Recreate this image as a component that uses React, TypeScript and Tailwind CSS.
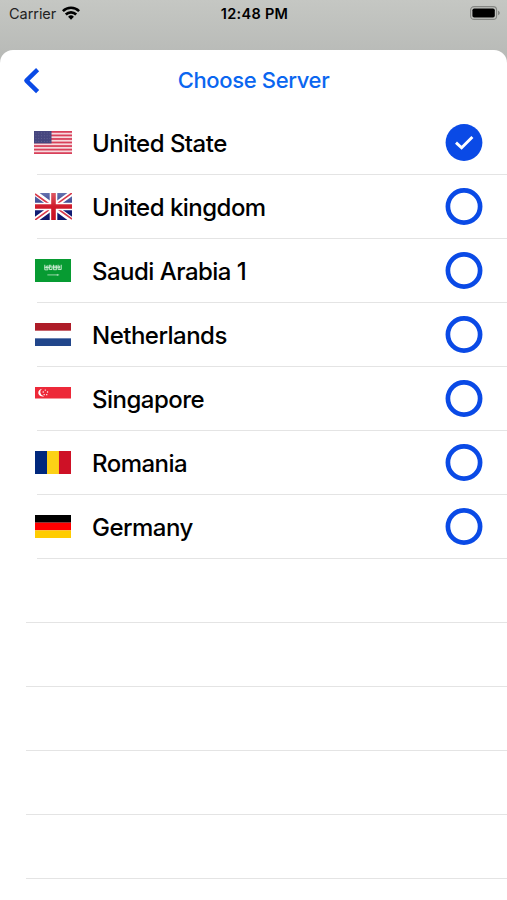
import React, { useState } from 'react';

// Flags
const UnitedStatesFlag = () => (
  <svg className="w-[38px] h-[23px]" viewBox="0 0 38 23" preserveAspectRatio="none">
    <rect width="38" height="23" fill="#f6d9de" />
    {[0, 1, 2, 3, 4, 5, 6].map((i) => (
      <rect key={i} y={i * 3.54} width="38" height="1.77" fill="#d8405a" />
    ))}
    <rect width="17.5" height="12.4" fill="#46467f" />
    {[2, 4.8, 7.6, 10.4].map((y) => (
      <path key={y} d={`M1.5 ${y}h15`} stroke="#74749f" strokeWidth="0.7" strokeDasharray="0.9 1.9" />
    ))}
  </svg>
);

const UnitedKingdomFlag = () => (
  <svg className="w-[37px] h-[27px]" viewBox="0 0 37 27">
    <defs>
      <linearGradient id="uk-blue" x1="0" y1="0" x2="0" y2="1">
        <stop offset="0" stopColor="#6672ae" />
        <stop offset="0.45" stopColor="#35428f" />
        <stop offset="0.55" stopColor="#15207c" />
        <stop offset="1" stopColor="#0d1668" />
      </linearGradient>
      <linearGradient id="uk-red" x1="0" y1="0" x2="0" y2="1">
        <stop offset="0" stopColor="#dc5964" />
        <stop offset="0.5" stopColor="#d01c2c" />
        <stop offset="1" stopColor="#c90f20" />
      </linearGradient>
    </defs>
    <rect width="37" height="27" fill="url(#uk-blue)" />
    <path d="M0 0L37 27M37 0L0 27" stroke="#fff" strokeWidth="5.4" />
    <path d="M0 0.9L14 11M37 26L23 16M37 0L23 10.2M0 27L14 16.8" stroke="#d8394a" strokeWidth="1.6" />
    <path d="M18.5 0V27M0 13.5H37" stroke="#fff" strokeWidth="7.6" />
    <path d="M16.2 0h4.6v11.2H37v4.6H20.8V27h-4.6V15.8H0v-4.6h16.2z" fill="url(#uk-red)" />
  </svg>
);

const SaudiArabiaFlag = () => (
  <svg className="w-9 h-[23px]" viewBox="0 0 35 24" preserveAspectRatio="none">
    <rect width="35" height="24" fill="#079b32" />
    <g fill="none" stroke="#d5f0dc" strokeWidth="0.9">
      <path d="M9.5 6v5.3h3V6.5M11 7v3M14 6v5h2.5V7M15.3 6v3M18 6v5.2h3V6.5M19.5 6.5v3.5M22.5 6v5h3V6M24 7v3M9.3 8.7h5M17 8.5h7" />
      <path d="M12 16.6h11.5M21.7 15.6v2" stroke="#a8dcb5" />
    </g>
  </svg>
);

const NetherlandsFlag = () => (
  <svg className="w-9 h-[23px]" viewBox="0 0 35 24" preserveAspectRatio="none">
    <rect width="35" height="24" fill="#fff" />
    <rect width="35" height="8" fill="#ae1c28" />
    <rect y="16" width="35" height="8" fill="#21468b" />
  </svg>
);

const SingaporeFlag = () => (
  <svg className="w-9 h-[23px]" viewBox="0 0 35 24" preserveAspectRatio="none">
    <rect width="35" height="24" fill="#fff" />
    <rect width="35" height="12" fill="#ed2939" />
    <path d="M7.2 1.8a4.1 4.1 0 1 0 1.6 7.9a4.3 4.3 0 0 1-1.6-7.9z" fill="#fff" />
    <g fill="#fff">
      <circle cx="10" cy="3.2" r="0.7" />
      <circle cx="8" cy="5.2" r="0.7" />
      <circle cx="12.2" cy="5.2" r="0.7" />
      <circle cx="8.9" cy="8" r="0.7" />
      <circle cx="11.4" cy="8" r="0.7" />
    </g>
  </svg>
);

const RomaniaFlag = () => (
  <svg className="w-9 h-[23px]" viewBox="0 0 35 24" preserveAspectRatio="none">
    <rect width="12" height="24" fill="#00287d" />
    <rect x="11.7" width="11.8" height="24" fill="#fcd116" />
    <rect x="23.3" width="11.7" height="24" fill="#ce1126" />
  </svg>
);

const GermanyFlag = () => (
  <svg className="w-9 h-[23px]" viewBox="0 0 35 24" preserveAspectRatio="none">
    <rect width="35" height="8" fill="#000" />
    <rect y="8" width="35" height="8" fill="#f00" />
    <rect y="16" width="35" height="8" fill="#fc0" />
  </svg>
);

// Radio style indicator on the right of a row
const Indicator = ({ checked }: { checked: boolean }) => (
  <svg className="w-[38px] h-[37px]" viewBox="0 0 38 37" fill="none">
    {checked ? (
      <>
        <circle cx="19" cy="18.5" r="18.4" fill="#0a4ae6" />
        <path d="M11 18.6l5.6 5.2L27.4 13" stroke="#fff" strokeWidth="2.9" />
      </>
    ) : (
      <circle cx="19" cy="18.5" r="16.1" stroke="#0a4ae6" strokeWidth="4.7" />
    )}
  </svg>
);

const StatusBar = () => (
  <div className="h-[27px] grid grid-cols-3 items-center pl-[9px] pr-[7px] text-black">
    <div className="flex items-center gap-[6px]">
      <span className="text-[14.5px] text-[#222] tracking-[-0.05px]">Carrier</span>
      <svg className="w-[18px] h-[14px] -mt-0.5" viewBox="0 0 18 14" fill="none" stroke="#000" strokeWidth="2.6">
        <path d="M0.9 5.1a11.6 11.6 0 0 1 16.2 0" />
        <path d="M3.8 8.5a7.4 7.4 0 0 1 10.4 0" />
        <path d="M9 13.8l-2.9-3a4.1 4.1 0 0 1 5.8 0z" fill="#000" stroke="none" />
      </svg>
    </div>
    <span className="text-center text-[14.5px] font-semibold tracking-[0.3px]">12:48 PM</span>
    <svg className="w-[31px] h-[14px] justify-self-end -mt-px -mr-px" viewBox="0 0 31 14">
      <rect x="0.6" y="0.6" width="26" height="12.8" rx="3.5" fill="none" stroke="#858784" strokeWidth="1.1" />
      <rect x="2.4" y="2.4" width="22.4" height="9.2" rx="1.8" fill="#000" />
      <path d="M28 4.8c2.4.7 2.4 3.7 0 4.4z" fill="#858784" />
    </svg>
  </div>
);

const servers = [
  { name: 'United State', Flag: UnitedStatesFlag },
  { name: 'United kingdom', Flag: UnitedKingdomFlag },
  { name: 'Saudi Arabia 1', Flag: SaudiArabiaFlag },
  { name: 'Netherlands', Flag: NetherlandsFlag },
  { name: 'Singapore', Flag: SingaporeFlag },
  { name: 'Romania', Flag: RomaniaFlag },
  { name: 'Germany', Flag: GermanyFlag },
];

export default function App() {
  const [selected, setSelected] = useState(0);

  return (
    <main className="w-full h-[900px] overflow-hidden flex flex-col bg-linear-to-b from-[#c5c7c3] from-0% to-[#b7b9b6] to-[60px] font-[Inter,sans-serif]">
      <StatusBar />

      <section className="mt-[23px] flex-1 bg-white rounded-t-[13px]">
        <header className="h-[61px] grid grid-cols-[60px_1fr_60px] items-center">
          <button className="pl-[23px]" aria-label="Back">
            <svg className="w-[17px] h-[26px]" viewBox="0 0 17 26" fill="none">
              <path d="M14.6 1.6L3.4 12.6L14.6 23.6" stroke="#0a4ae6" strokeWidth="4.4" strokeLinejoin="round" />
            </svg>
          </button>
          <h1 className="text-center text-[22px] font-medium tracking-[-0.35px] text-[#0a66f0]">Choose Server</h1>
        </header>

        <ul>
          {servers.map(({ name, Flag }, index) => (
            <li key={name}>
              <button
                onClick={() => setSelected(index)}
                className="w-full h-[63px] pl-[34px] pr-6 flex items-center text-left"
              >
                <span className="w-[38px] flex justify-center">
                  <Flag />
                </span>
                <span className="ml-5 pt-0.5 flex-1 text-[24px] font-medium tracking-[-0.52px] text-black">{name}</span>
                <Indicator checked={selected === index} />
              </button>
              <div className="ml-[37px] h-px bg-[#e4e4e4]" />
            </li>
          ))}
          {/* Empty rows fill the rest of the table */}
          {[0, 1, 2, 3, 4].map((row) => (
            <li key={row} className="h-16 ml-[26px] border-b border-[#e4e4e4]" />
          ))}
        </ul>
      </section>
    </main>
  );
}
